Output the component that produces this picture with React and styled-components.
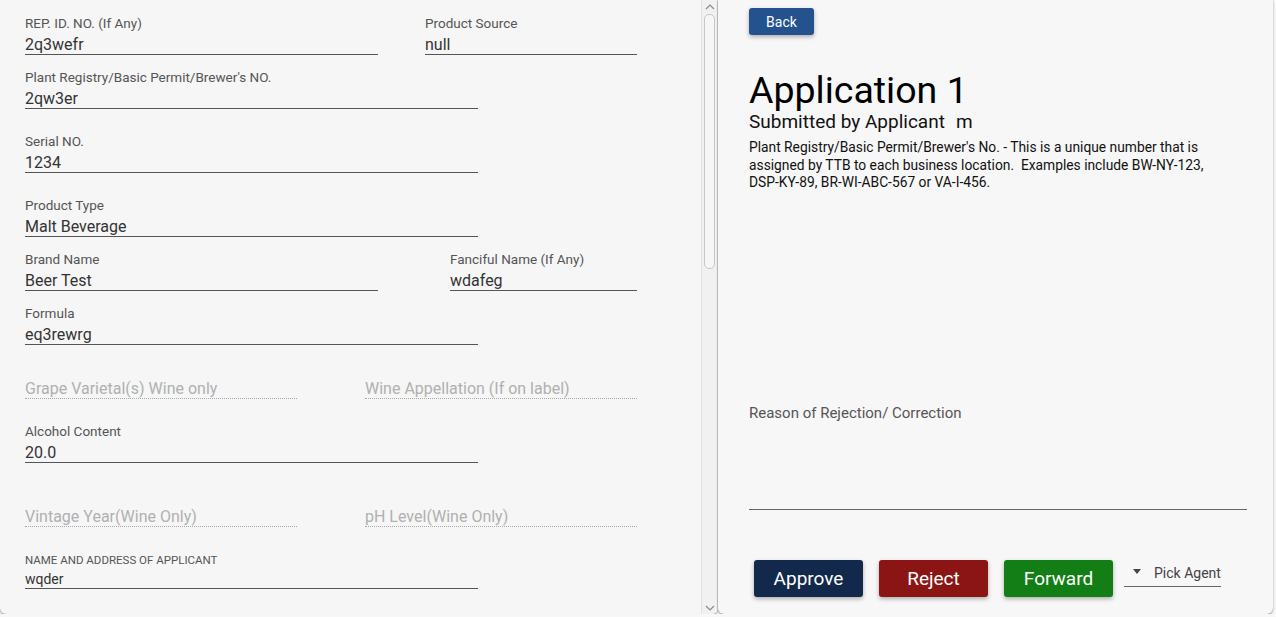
import React from 'react';
import styled, { createGlobalStyle } from 'styled-components';

const GlobalStyle = createGlobalStyle`
	html, body {
		margin: 0;
		padding: 0;
		background: #f7f7f7;
		font-family: Roboto, 'Liberation Sans', sans-serif;
		overflow: hidden;
	}
`;

const leftRows = [
	{ space: 15, fields: [{ label: 'REP. ID. NO. (If Any)', value: '2q3wefr', width: 353 }, { label: 'Product Source', value: 'null', width: 212 }] },
	{ space: 14, fields: [{ label: "Plant Registry/Basic Permit/Brewer's NO.", value: '2qw3er', width: 453 }] },
	{ space: 24, fields: [{ label: 'Serial NO.', value: '1234', width: 453 }] },
	{ space: 24, fields: [{ label: 'Product Type', value: 'Malt Beverage', width: 453 }] },
	{ space: 14, fields: [{ label: 'Brand Name', value: 'Beer Test', width: 353 }, { label: 'Fanciful Name (If Any)', value: 'wdafeg', width: 187 }] },
	{ space: 14, fields: [{ label: 'Formula', value: 'eq3rewrg', width: 453 }] },
	{ space: 14, fields: [{ placeholder: 'Grape Varietal(s) Wine only', width: 272 }, { placeholder: 'Wine Appellation (If on label)', width: 272 }] },
	{ space: 24, fields: [{ label: 'Alcohol Content', value: '20.0', width: 453 }] },
	{ space: 24, fields: [{ placeholder: 'Vintage Year(Wine Only)', width: 272 }, { placeholder: 'pH Level(Wine Only)', width: 272 }] },
	{ space: 26, small: true, fields: [{ label: 'NAME AND ADDRESS OF APPLICANT', value: 'wqder', width: 453 }] },
];

const Field = ({ label, value, placeholder, width, small }) => {
	if (placeholder) {
		return (
			<FieldBox $width={width}>
				<Label>&nbsp;</Label>
				<Value $empty>{placeholder}</Value>
			</FieldBox>
		);
	}
	return (
		<FieldBox $width={width}>
			<Label $small={small}>{label}</Label>
			<Value $small={small}>{value}</Value>
		</FieldBox>
	);
};

const App = () => {
	return (
		<Page>
			<GlobalStyle />
			<LeftCard>
				<FormScroll>
					{leftRows.map((row, i) => (
						<Row key={i} $space={row.space}>
							{row.fields.map((f, j) => (
								<Field key={j} {...f} small={row.small} />
							))}
						</Row>
					))}
				</FormScroll>
				<Scrollbar>
					<Arrow>
						<svg width='10' height='6' viewBox='0 0 10 6'>
							<path d='M1 5 L5 1 L9 5' fill='none' stroke='#8a8a8a' strokeWidth='1.2' />
						</svg>
					</Arrow>
					<Track>
						<Thumb />
					</Track>
					<Arrow>
						<svg width='10' height='6' viewBox='0 0 10 6'>
							<path d='M1 1 L5 5 L9 1' fill='none' stroke='#8a8a8a' strokeWidth='1.2' />
						</svg>
					</Arrow>
				</Scrollbar>
			</LeftCard>
			<RightCard>
				<BackButton>Back</BackButton>
				<Title>Application 1</Title>
				<Subtitle>
					Submitted by Applicant<Applicant>m</Applicant>
				</Subtitle>
				<Hint>
					Plant Registry/Basic Permit/Brewer's No. - This is a unique number that is assigned by TTB to each business
					location.&nbsp; Examples include BW-NY-123, DSP-KY-89, BR-WI-ABC-567 or VA-I-456.
				</Hint>
				<Reason>
					<ReasonLabel>Reason of Rejection/ Correction</ReasonLabel>
				</Reason>
				<Actions>
					<ActionButton $bg='#13294b'>Approve</ActionButton>
					<ActionButton $bg='#8b1515'>Reject</ActionButton>
					<ActionButton $bg='#137e16'>Forward</ActionButton>
					<AgentSelect>
						<Caret />
						<span>Pick Agent</span>
					</AgentSelect>
				</Actions>
			</RightCard>
		</Page>
	);
};

export default App;

const Page = styled.div`
	display: flex;
	height: 614px;
	width: 1276px;
`;

const LeftCard = styled.div`
	width: 718px;
	flex-shrink: 0;
	display: flex;
	background: #f6f6f6;
	border-radius: 0 0 6px 6px;
	box-shadow: 0 1px 2px rgba(0, 0, 0, 0.45);
	overflow: hidden;
`;

const FormScroll = styled.div`
	flex: 1;
	padding-left: 25px;
	overflow: hidden;
`;

const Row = styled.div`
	display: flex;
	justify-content: space-between;
	width: 612px;
	margin-top: ${(p) => p.$space}px;
`;

const FieldBox = styled.div`
	width: ${(p) => p.$width}px;
	display: flex;
	flex-direction: column;
	gap: 4px;
	&:only-child {
		margin-right: auto;
	}
`;

const Label = styled.div`
	font-size: ${(p) => (p.$small ? '11.5px' : '13.5px')};
	line-height: ${(p) => (p.$small ? '14px' : '16px')};
	color: #555;
	white-space: nowrap;
`;

const Value = styled.div`
	font-size: ${(p) => (p.$small ? '14px' : '16px')};
	line-height: ${(p) => (p.$small ? '17px' : '19px')};
	color: ${(p) => (p.$empty ? '#b0b0b0' : '#333')};
	border-bottom: 1px ${(p) => (p.$empty ? 'dotted #a8a8a8' : 'solid #555')};
	white-space: nowrap;
`;

const Scrollbar = styled.div`
	width: 15px;
	display: flex;
	flex-direction: column;
	border-left: 1px solid #e2e2e2;
	border-right: 1px solid #d2d2d2;
	background: #f1f1f1;
`;

const Arrow = styled.div`
	height: 13px;
	display: flex;
	align-items: center;
	justify-content: center;
`;

const Track = styled.div`
	flex: 1;
	padding: 1px 2px;
`;

const Thumb = styled.div`
	height: 253px;
	border: 1px solid #c8c8c8;
	border-radius: 5px;
	background: #f6f6f6;
`;

const RightCard = styled.div`
	flex: 1;
	margin-right: 3px;
	padding-left: 31px;
	padding-right: 25px;
	padding-top: 8px;
	display: flex;
	flex-direction: column;
	align-items: flex-start;
	background: #f7f7f7;
	border-radius: 0 0 6px 6px;
	box-shadow: 0 1px 2px rgba(0, 0, 0, 0.45);
`;

const BackButton = styled.button`
	width: 65px;
	height: 27px;
	border: none;
	border-radius: 3px;
	background: #24528f;
	color: #fff;
	font-family: inherit;
	font-size: 14px;
	box-shadow: 0 2px 4px rgba(0, 0, 0, 0.3);
	cursor: pointer;
`;

const Title = styled.h1`
	margin: 34px 0 0;
	font-size: 37.5px;
	font-weight: 400;
	line-height: 42px;
	color: #000;
`;

const Subtitle = styled.div`
	font-size: 19px;
	line-height: 22px;
	color: #111;
`;

const Applicant = styled.span`
	margin-left: 11px;
`;

const Hint = styled.p`
	margin: 6px 0 0;
	font-size: 13.8px;
	line-height: 17.5px;
	color: #111;
	max-width: 470px;
`;

const Reason = styled.div`
	margin-top: 212px;
	width: 498px;
	height: 105px;
	border-bottom: 1px solid #666;
`;

const ReasonLabel = styled.div`
	font-size: 15px;
	line-height: 18px;
	color: #555;
`;

const Actions = styled.div`
	display: flex;
	align-items: center;
	gap: 16px;
	margin-top: 50px;
	padding-left: 5px;
`;

const ActionButton = styled.button`
	width: 109px;
	height: 37px;
	border: none;
	border-radius: 3px;
	background: ${(p) => p.$bg};
	color: #fff;
	font-family: inherit;
	font-size: 19px;
	box-shadow: 0 2px 4px rgba(0, 0, 0, 0.3);
	cursor: pointer;
`;

const AgentSelect = styled.div`
	display: flex;
	align-items: center;
	gap: 13px;
	width: 97px;
	height: 27px;
	margin-left: -5px;
	padding-left: 9px;
	box-sizing: border-box;
	border-bottom: 1px solid #666;
	font-size: 14px;
	color: #444;
	align-self: flex-start;
`;

const Caret = styled.span`
	width: 0;
	height: 0;
	border-left: 4.5px solid transparent;
	border-right: 4.5px solid transparent;
	border-top: 5px solid #444;
	margin-top: -3px;
`;
